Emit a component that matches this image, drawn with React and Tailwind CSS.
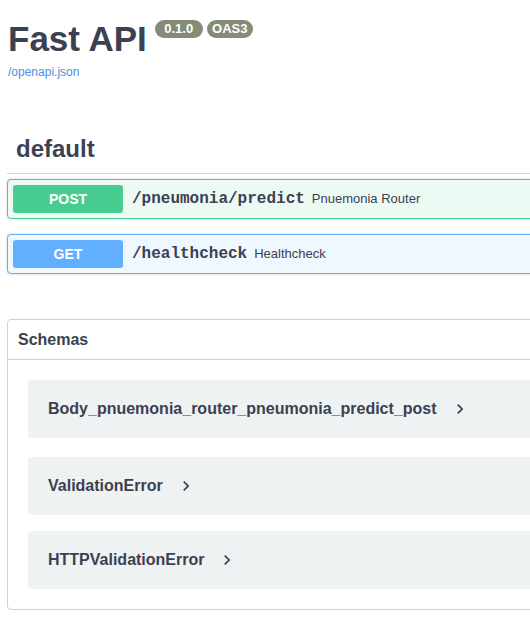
import React from "react";

function Chevron() {
  return (
    <svg width="20" height="20" viewBox="0 0 24 24" className="ml-[13px] shrink-0">
      <path d="M10 6L8.59 7.41 13.17 12l-4.58 4.59L10 18l6-6z" fill="#3b4151" />
    </svg>
  );
}

function Op({ method, path, summary, border, bg, btn }) {
  return (
    <div
      className={`flex items-center pl-[5px] py-[5px] border rounded-[4px] shadow-[0_0_3px_rgba(0,0,0,0.19)] ${border} ${bg}`}
    >
      <div
        className={`w-[110px] h-[28px] rounded-[3px] flex items-center justify-center text-white font-bold text-[14px] ${btn}`}
      >
        {method}
      </div>
      <span className="ml-[9px] font-['Liberation_Mono','Courier_New',monospace] font-bold text-[16px] leading-[20px] text-[#3b4151]">
        {path}
      </span>
      <span className="ml-[7px] text-[13px] leading-[16px] text-[#3b4151]">{summary}</span>
    </div>
  );
}

function Model({ name, className }) {
  return (
    <div className={`mx-[20px] h-[58px] rounded-[4px] bg-[#eff2f3] flex items-center px-[20px] ${className}`}>
      <span className="font-bold text-[16px] leading-[20px] text-[#3b4151]">{name}</span>
      <Chevron />
    </div>
  );
}

export default function App() {
  return (
    <div className="w-[530px] h-[631px] overflow-hidden bg-white font-['Liberation_Sans',Arial,sans-serif] text-[#3b4151]">
      <div className="w-[760px] pl-[7px]">
        <div className="flex items-start pt-[21px] pl-[1px]">
          <h1 className="text-[35px] leading-[36px] font-bold text-[#3b4151]">Fast API</h1>
          <span className="ml-[8px] -mt-[1px] w-[48px] h-[18px] rounded-full bg-[#848c78] text-white font-bold text-[13px] leading-[18px] flex items-center justify-center">
            0.1.0
          </span>
          <span className="ml-[4px] -mt-[1px] w-[46px] h-[18px] rounded-full bg-[#848c78] text-white font-bold text-[13px] leading-[18px] flex items-center justify-center">
            OAS3
          </span>
        </div>
        <div className="mt-[8px] pl-[1px] text-[12px] leading-[14px] text-[#4990e2]">/openapi.json</div>

        <div className="mt-[58px] pl-[9px] pb-[12px] border-b border-[#d3d4d8]">
          <h3 className="text-[24px] leading-[24px] font-bold text-[#3b4151]">default</h3>
        </div>

        <div className="mt-[5px]">
          <Op
            method="POST"
            path="/pneumonia/predict"
            summary="Pnuemonia Router"
            border="border-[#49cc90]"
            bg="bg-[#edfaf4]"
            btn="bg-[#49cc90]"
          />
        </div>
        <div className="mt-[15px]">
          <Op
            method="GET"
            path="/healthcheck"
            summary="Healthcheck"
            border="border-[#61affe]"
            bg="bg-[#eff7ff]"
            btn="bg-[#61affe]"
          />
        </div>

        <div className="mt-[45px] border border-[#cfd1d5] rounded-[4px]">
          <div className="h-[40px] flex items-center pl-[10px] border-b border-[#cfd1d5]">
            <span className="text-[16px] leading-[20px] font-bold text-[#3b4151]">Schemas</span>
          </div>
          <div className="pt-[20px] pb-[20px]">
            <Model name="Body_pnuemonia_router_pneumonia_predict_post" className="mb-[19px]" />
            <Model name="ValidationError" className="mb-[16px]" />
            <Model name="HTTPValidationError" />
          </div>
        </div>
      </div>
    </div>
  );
}
